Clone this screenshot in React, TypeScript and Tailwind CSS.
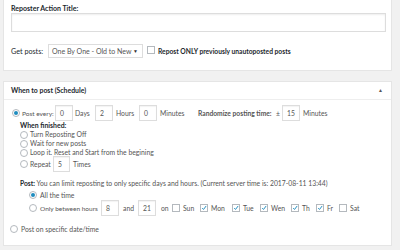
import React from 'react';

const Radio = ({ checked = false }: { checked?: boolean }) => (
  <span className="inline-flex items-center justify-center w-[8px] h-[8px] rounded-full border border-[#b4b9be] bg-white shrink-0">
    {checked && <span className="w-[4px] h-[4px] rounded-full bg-[#1e8cbe]" />}
  </span>
);

const Check = ({ checked = false }: { checked?: boolean }) => (
  <span className="inline-flex items-center justify-center w-[8px] h-[8px] border border-[#b4b9be] bg-white shrink-0">
    {checked && (
      <svg viewBox="0 0 10 10" className="w-[8px] h-[8px]">
        <path d="M2 5.2 L4.2 7.4 L8.6 1.6" fill="none" stroke="#1e8cbe" strokeWidth="1.6" />
      </svg>
    )}
  </span>
);

const Num = ({ value, w = 'w-[18px]' }: { value: string; w?: string }) => (
  <span className={`inline-flex items-center h-[16px] ${w} shrink-0 border border-[#ddd] bg-white pl-[4px] shadow-[inset_0_1px_1px_rgba(0,0,0,0.05)]`}>
    {value}
  </span>
);

const DAYS = [
  { d: 'Sun', on: false, w: 'w-[28px]' },
  { d: 'Mon', on: true, w: 'w-[32px]' },
  { d: 'Tue', on: true, w: 'w-[28px]' },
  { d: 'Wen', on: true, w: 'w-[31px]' },
  { d: 'Th', on: true, w: 'w-[25px]' },
  { d: 'Fr', on: true, w: 'w-[23px]' },
  { d: 'Sat', on: false, w: 'w-[28px]' },
];

export default function App() {
  return (
    <div
      className="w-[400px] h-[250px] bg-[#f1f1f1] overflow-hidden text-[6.8px] leading-[9px] text-[#555] whitespace-nowrap"
      style={{ fontFamily: 'Lato, "Liberation Sans", sans-serif' }}>
      {/* action title + get posts */}
      <div className="ml-[3px] w-[389px] h-[71px] bg-white border border-t-0 border-[#e5e5e5] px-[7px] pt-[4px]">
        <div className="h-[9px] text-[7px] font-bold text-[#23282d]">Reposter Action Title:</div>
        <div className="h-[19px] w-[375px] border border-[#ddd] bg-white shadow-[inset_0_1px_2px_rgba(0,0,0,0.07)]" />
        <div className="flex items-center mt-[12px] h-[14px]">
          <span className="w-[37px] text-[7.2px] text-[#23282d]">Get posts:</span>
          <span className="inline-flex items-center justify-between h-[14px] w-[95px] border border-[#ddd] bg-white pl-[3px] pr-[4px]">
            <span className="text-[7px]">One By One - Old to New</span>
            <span className="text-[5px] text-[#333]">▼</span>
          </span>
          <span className="ml-[4px]"><Check /></span>
          <span className="ml-[3px] text-[6.7px] font-bold text-[#23282d]">Repost ONLY previously unautoposted posts</span>
        </div>
      </div>

      {/* schedule */}
      <div className="mt-[10px] ml-[3px] w-[389px] h-[165px] bg-white border border-[#e5e5e5]">
        <div className="flex items-center justify-between h-[18px] border-b border-[#eee] pl-[7px] pr-[8px]">
          <span className="text-[6.9px] font-bold text-[#23282d]">When to post (Schedule)</span>
          <span className="text-[5px] text-[#555]">▲</span>
        </div>

        <div className="pl-[8px] pt-[5px]">
          <div className="flex items-center h-[16px]">
            <Radio checked />
            <span className="w-[35px] pl-[2px] text-[6.5px]">Post every:</span>
            <Num value="0" />
            <span className="w-[22px] pl-[2px]">Days</span>
            <Num value="2" />
            <span className="w-[26px] pl-[3px]">Hours</span>
            <Num value="0" />
            <span className="w-[41px] pl-[3px]">Minutes</span>
            <span className="w-[84px] flex justify-between pr-[2px]">
              <span className="text-[6.7px] font-bold">Randomize posting time:</span>
              <span>±</span>
            </span>
            <Num value="15" />
            <span className="pl-[3px]">Minutes</span>
          </div>

          <div className="pl-[8px]">
            <div className="h-[9px] text-[6.9px] font-bold text-[#23282d]">When finished:</div>
            <div className="flex items-center h-[9px]"><Radio /><span className="ml-[2px]">Turn Reposting Off</span></div>
            <div className="flex items-center h-[9px]"><Radio /><span className="ml-[2px]">Wait for new posts</span></div>
            <div className="flex items-center h-[9px]"><Radio /><span className="ml-[2px]">Loop it. Reset and Start from the begining</span></div>
            <div className="flex items-center h-[14px]">
              <Radio />
              <span className="w-[25px] pl-[2px]">Repeat</span>
              <Num value="5" w="w-[17px]" />
              <span className="pl-[3px]">Times</span>
            </div>

            <div className="h-[9px] mt-[8px]">
              <span className="text-[6.7px] font-bold text-[#23282d]">Post:</span> You can limit reposting to only specific days and hours. (Current server time is: 2017-08-11 13:44)
            </div>
            <div className="pl-[9px]">
              <div className="flex items-center h-[12px] mt-[1px]"><Radio checked /><span className="ml-[3px]">All the time</span></div>
              <div className="flex items-center h-[14px]">
                <Radio />
                <span className="w-[64px] pl-[3px] text-[6.5px]">Only between hours</span>
                <Num value="8" />
                <span className="w-[19px] pl-[4px]">and</span>
                <Num value="21" />
                <span className="w-[16px] pl-[5px]">on</span>
                {DAYS.map((x) => (
                  <span key={x.d} className={`inline-flex items-center ${x.w}`}>
                    <Check checked={x.on} />
                    <span className="ml-[3px]">{x.d}</span>
                  </span>
                ))}
              </div>
            </div>
          </div>

          <div className="flex items-center h-[12px] mt-[8px] -ml-[2px]">
            <Radio />
            <span className="ml-[3px]">Post on specific date/time</span>
          </div>
        </div>
      </div>
    </div>
  );
}
